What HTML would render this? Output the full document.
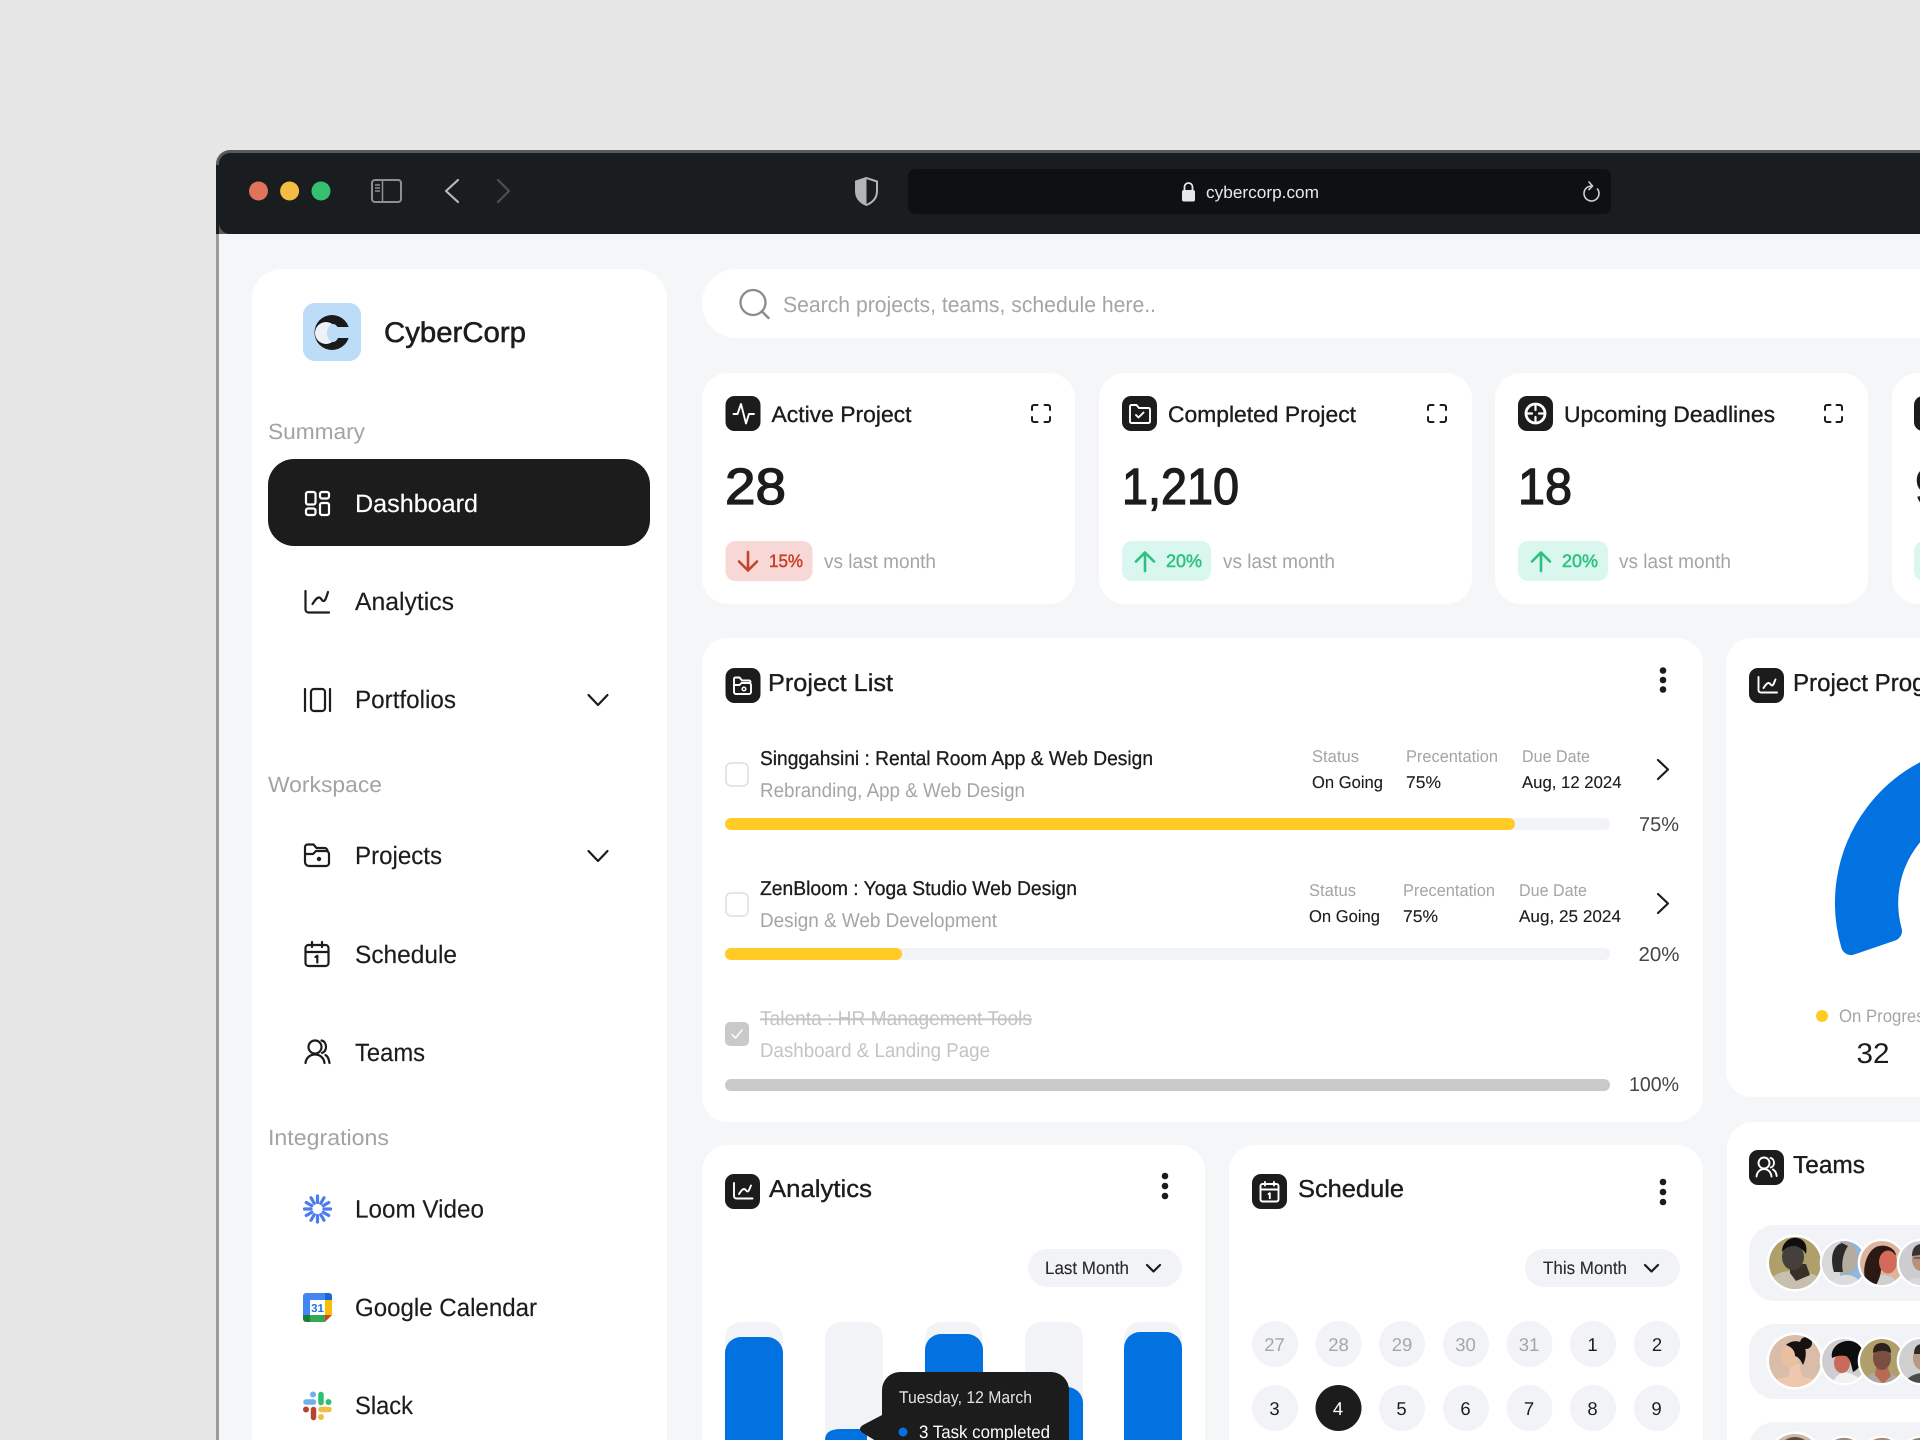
<!DOCTYPE html>
<html lang="en"><head><meta charset="utf-8"><title>CyberCorp Dashboard</title>
<style>
html,body{margin:0;padding:0;background:#e6e6e6;width:1920px;height:1440px;overflow:hidden}
svg{display:block}
text{font-family:"Liberation Sans",sans-serif;fill:#1c1c1c;text-rendering:geometricPrecision}
.m{stroke:#1c1c1c;stroke-width:.55px}
.nav{font-size:25px;stroke:#1c1c1c;stroke-width:.15px}
.sec{font-size:22px;fill:#a3a3a3}
.ct{font-size:22.5px;stroke:#1c1c1c;stroke-width:.35px}
.pt{font-size:24.5px;stroke:#1c1c1c;stroke-width:.35px}
.num{font-size:51px;stroke:#1c1c1c;stroke-width:1.3px}
.g{fill:#a5a5a5}
.vs{font-size:20px;fill:#a5a5a5}
.rt{font-size:20px;stroke:#1c1c1c;stroke-width:.3px}
.rs{font-size:20px;fill:#a5a5a5}
.lb{font-size:17px;fill:#a5a5a5}
.vl{font-size:17px;stroke:#1c1c1c;stroke-width:.12px}
.pc{font-size:20px;fill:#454545}
.d{font-size:18.5px;text-anchor:middle}
.dg{font-size:18.5px;text-anchor:middle;fill:#a5a5a5}
.dd{font-size:18px;fill:#2a2a2a;stroke:#2a2a2a;stroke-width:.12px}
.br{font-size:18px;fill:#c4432c;stroke:#c4432c;stroke-width:.5px}
.bg{font-size:18px;fill:#2cc17e;stroke:#2cc17e;stroke-width:.5px}
.i{fill:none;stroke:#1c1c1c;stroke-width:2.2;stroke-linecap:round;stroke-linejoin:round}
.e{fill:none;stroke:#1c1c1c;stroke-width:2;stroke-linecap:round;stroke-linejoin:round}
.w{fill:none;stroke:#fff;stroke-width:1.9;stroke-linecap:round;stroke-linejoin:round}
</style></head>
<body>
<svg xmlns="http://www.w3.org/2000/svg" width="1920" height="1440" viewBox="0 0 1920 1440">
<rect width="1920" height="1440" fill="#e6e6e6"/>
<!-- window -->
<rect x="216" y="150" width="1800" height="100" rx="14" fill="#5a5a5a"/>
<rect x="219" y="153" width="1800" height="81" rx="11" fill="#1a1d20"/>
<rect x="216" y="165" width="3" height="69" fill="#1a1d20"/>
<rect x="216" y="234" width="3" height="1206" fill="#9c9c9c"/>
<rect x="219" y="234" width="1701" height="1206" fill="#f5f6f8"/>
<circle cx="258.500" cy="191" r="9.500" fill="#e0735b"/>
<circle cx="289.600" cy="191" r="9.500" fill="#f4bc42"/>
<circle cx="321" cy="191" r="9.500" fill="#35c06f"/>
<rect x="372" y="180" width="29" height="22" rx="3" fill="none" stroke="#8d8f91" stroke-width="2"/>
<path d="M382.500 180v22M375 185h5M375 188h5M375 191h5" fill="none" stroke="#8d8f91" stroke-width="1.500"/>
<path d="M458 180L446 191L458 202" fill="none" stroke="#b9babb" stroke-width="2.200" stroke-linecap="round" stroke-linejoin="round"/>
<path d="M498 180L509 191L498 202" fill="none" stroke="#4d5053" stroke-width="2.200" stroke-linecap="round" stroke-linejoin="round"/>
<path d="M866.500 178L856 181.500V191C856 198 860.500 202.500 866.500 205C872.500 202.500 877 198 877 191V181.500Z" fill="none" stroke="#b4b4b4" stroke-width="2"/>
<path d="M866.500 178L856 181.500V191C856 198 860.500 202.500 866.500 205Z" fill="#b4b4b4"/>
<rect x="908" y="169" width="703" height="45" rx="7" fill="#0e1114"/>
<path d="M1184.500 190v-3a4 4 0 0 1 8 0v3" fill="none" stroke="#e8e8e8" stroke-width="1.800"/>
<rect x="1182" y="190" width="13" height="11.500" rx="2" fill="#e8e8e8"/>
<text x="1206" y="198" font-size="17" textLength="113" lengthAdjust="spacingAndGlyphs" style="fill:#e8e8e8">cybercorp.com</text>
<path d="M1597.500 189A7.500 7.500 0 1 1 1591.500 186" fill="none" stroke="#cfcfcf" stroke-width="1.600" stroke-linecap="round"/>
<path d="M1589 182l3.500 4-3.500 3.500" fill="none" stroke="#cfcfcf" stroke-width="1.600" stroke-linecap="round" stroke-linejoin="round"/>

<!-- sidebar -->
<path d="M252 1440V299a30 30 0 0 1 30-30H637a30 30 0 0 1 30 30V1440Z" fill="#fff"/>
<rect x="303" y="303" width="58" height="58" rx="12" fill="#bddcf8"/>
<circle cx="332" cy="332.500" r="17.500" fill="#1a1a1a"/>
<circle cx="326" cy="333" r="11" fill="#eef1f6"/>
<ellipse cx="333" cy="333" rx="6" ry="9" fill="#bddcf8"/>
<rect x="335" y="327" width="16" height="11" fill="#bddcf8"/>
<text x="384" y="342" font-size="28.500" class="m" textLength="142" lengthAdjust="spacingAndGlyphs">CyberCorp</text>

<text x="268" y="439" class="sec" textLength="97" lengthAdjust="spacingAndGlyphs">Summary</text>
<rect x="268" y="459" width="382" height="87" rx="26" fill="#1c1c1c"/>
<g fill="none" stroke="#fff" stroke-width="2.200" stroke-linejoin="round">
<rect x="306" y="492" width="9.500" height="12.500" rx="2"/><rect x="320" y="492" width="9" height="6.500" rx="2"/><rect x="306" y="508.500" width="9.500" height="6.500" rx="2"/><rect x="320" y="503" width="9" height="12" rx="2"/></g>
<text x="355" y="512" class="nav" textLength="123" lengthAdjust="spacingAndGlyphs" style="fill:#fff;stroke:#fff">Dashboard</text>

<path class="i" d="M305.500 591v18.500a3 3 0 0 0 3 3H329M312.500 604c2-3 4-6.500 6.500-6.500s2.500 3.500 4.500 3.500 3-4.500 4.500-9"/>
<text x="355" y="610" class="nav" textLength="99" lengthAdjust="spacingAndGlyphs">Analytics</text>
<path class="i" d="M305 689v22M330 689v22"/><rect class="i" x="311" y="689" width="14" height="22" rx="3"/>
<text x="355" y="708" class="nav" textLength="101" lengthAdjust="spacingAndGlyphs">Portfolios</text>
<path class="i" d="M588.500 695l9.500 10 9.500-10"/>

<text x="268" y="792" class="sec" textLength="114" lengthAdjust="spacingAndGlyphs">Workspace</text>
<path class="i" d="M305 862V847a2.500 2.500 0 0 1 2.500-2.500h6l3 3.500h8a3 3 0 0 1 3 3M305 862a4 4 0 0 0 4 4h17a3 3 0 0 0 3-3v-9a3 3 0 0 0-3-3h-10l-3 3h-8"/><circle cx="319" cy="859" r="2.200" fill="#1c1c1c"/>
<text x="355" y="864" class="nav" textLength="87" lengthAdjust="spacingAndGlyphs">Projects</text>
<path class="i" d="M588.500 851l9.500 10 9.500-10"/>
<rect class="i" x="305.500" y="945" width="23" height="21" rx="3"/><path class="i" d="M305.500 952h23M312 942v5M322 942v5M315.500 957l1.800-1.200v6.700"/>
<text x="355" y="963" class="nav" textLength="102" lengthAdjust="spacingAndGlyphs">Schedule</text>
<circle class="i" cx="315" cy="1047" r="6.500"/><path class="i" d="M305.500 1063c.5-5 4.500-8.500 9.500-8.500s9 3.500 9.500 8.500M321.500 1040.500c3 .5 4.500 3.500 4.500 6.500s-1.500 5-4 6M325.500 1055c2.500 1.500 3.500 4.500 4 8"/>
<text x="355" y="1061" class="nav" textLength="70" lengthAdjust="spacingAndGlyphs">Teams</text>

<text x="268" y="1145" class="sec" textLength="121" lengthAdjust="spacingAndGlyphs">Integrations</text>
<g stroke="#4a7cf0" stroke-width="3.200" stroke-linecap="round">
<path d="M317.500 1202.500v-6.500"/><path d="M317.500 1202.500v-6.500" transform="rotate(30 317.500 1209)"/><path d="M317.500 1202.500v-6.500" transform="rotate(60 317.500 1209)"/><path d="M317.500 1202.500v-6.500" transform="rotate(90 317.500 1209)"/><path d="M317.500 1202.500v-6.500" transform="rotate(120 317.500 1209)"/><path d="M317.500 1202.500v-6.500" transform="rotate(150 317.500 1209)"/><path d="M317.500 1202.500v-6.500" transform="rotate(180 317.500 1209)"/><path d="M317.500 1202.500v-6.500" transform="rotate(210 317.500 1209)"/><path d="M317.500 1202.500v-6.500" transform="rotate(240 317.500 1209)"/><path d="M317.500 1202.500v-6.500" transform="rotate(270 317.500 1209)"/><path d="M317.500 1202.500v-6.500" transform="rotate(300 317.500 1209)"/><path d="M317.500 1202.500v-6.500" transform="rotate(330 317.500 1209)"/></g>
<text x="355" y="1217.500" class="nav" textLength="129" lengthAdjust="spacingAndGlyphs">Loom Video</text>
<path d="M303 1296a3 3 0 0 1 3-3h19v7h-15v15h-7z" fill="#4285f4"/><path d="M325 1293h4a3 3 0 0 1 3 3v4h-7z" fill="#1967d2"/>
<rect x="310" y="1300" width="15" height="15" fill="#fff"/><rect x="325" y="1300" width="7" height="15" fill="#fbbc04"/>
<rect x="310" y="1315" width="15" height="7" fill="#34a853"/><path d="M303 1315h7v7h-4a3 3 0 0 1-3-3z" fill="#188038"/><path d="M325 1315h7l-7 7z" fill="#c9432f"/>
<text x="317.500" y="1312" font-size="11.500" text-anchor="middle" style="fill:#1a73e8;font-weight:bold">31</text>
<text x="355" y="1316" class="nav" textLength="182" lengthAdjust="spacingAndGlyphs">Google Calendar</text>
<g stroke-linecap="round" fill="none" stroke-width="5.500">
<path stroke="#6db1ee" d="M306 1402h7.500"/><path stroke="#2fbf71" d="M321 1394.500v8"/><path stroke="#f2bd42" d="M321 1409.500h8"/><path stroke="#b8442e" d="M313.500 1409.500v8"/></g>
<circle cx="313" cy="1394.500" r="3" fill="#6db1ee"/><circle cx="328.500" cy="1402" r="3" fill="#2fbf71"/><circle cx="321" cy="1417" r="3" fill="#f2bd42"/><circle cx="306" cy="1409.500" r="3" fill="#b8442e"/>
<text x="355" y="1414" class="nav" textLength="58" lengthAdjust="spacingAndGlyphs">Slack</text>

<!-- search -->
<rect x="702" y="269" width="1400" height="69" rx="34" fill="#fff"/>
<circle cx="753" cy="302.500" r="12.500" fill="none" stroke="#8b8b8b" stroke-width="2.300"/><path d="M762.500 312l6 6" stroke="#8b8b8b" stroke-width="2.300" stroke-linecap="round"/>
<text x="783" y="312" font-size="22" textLength="373" lengthAdjust="spacingAndGlyphs" class="g">Search projects, teams, schedule here..</text>

<!-- stat cards -->
<rect x="702" y="373" width="373" height="231" rx="26" fill="#fff"/>
<rect x="725.500" y="396" width="35" height="35" rx="9" fill="#1c1c1c"/>
<path class="w" d="M733.500 414h4l3.500-10 5 19.500 3-9.500h5"/>
<text x="771.500" y="422" class="ct" textLength="140" lengthAdjust="spacingAndGlyphs">Active Project</text>
<path class="e" d="M1032 410v-3a2 2 0 0 1 2-2h3.500M1044.500 405h3.500a2 2 0 0 1 2 2v3M1032 417v3a2 2 0 0 0 2 2h3.500M1044.500 422h3.500a2 2 0 0 0 2-2v-3"/>
<text x="725" y="504" class="num" textLength="61" lengthAdjust="spacingAndGlyphs">28</text>
<rect x="725.500" y="541" width="87" height="40" rx="10" fill="#f8d8d6"/>
<path d="M748 552v18M739 561.500l9 9 9-9" fill="none" stroke="#c4432c" stroke-width="2.600" stroke-linecap="round" stroke-linejoin="round"/>
<text x="769" y="567" class="br" textLength="34" lengthAdjust="spacingAndGlyphs">15%</text>
<text x="824" y="568" class="vs" textLength="112" lengthAdjust="spacingAndGlyphs">vs last month</text>

<rect x="1099" y="373" width="373" height="231" rx="26" fill="#fff"/>
<rect x="1122" y="396" width="35" height="35" rx="9" fill="#1c1c1c"/>
<path class="w" d="M1130 421.500v-15a1.500 1.500 0 0 1 1.500-1.500h5l2.500 3h9.500a1.500 1.500 0 0 1 1.500 1.500v12a1.500 1.500 0 0 1-1.500 1.500h-17a1.500 1.500 0 0 1-1.500-1.500zM1136 415l2.500 2.500 5-5"/>
<text x="1168" y="422" class="ct" textLength="188" lengthAdjust="spacingAndGlyphs">Completed Project</text>
<path class="e" d="M1428 410v-3a2 2 0 0 1 2-2h3.500M1440.500 405h3.500a2 2 0 0 1 2 2v3M1428 417v3a2 2 0 0 0 2 2h3.500M1440.500 422h3.500a2 2 0 0 0 2-2v-3"/>
<text x="1122" y="504" class="num" textLength="117" lengthAdjust="spacingAndGlyphs">1,210</text>
<rect x="1122" y="541" width="89" height="40" rx="10" fill="#d9f7ee"/>
<path d="M1145 571v-18M1136 561.500l9-9 9 9" fill="none" stroke="#2cc17e" stroke-width="2.600" stroke-linecap="round" stroke-linejoin="round"/>
<text x="1166" y="567" class="bg" textLength="36" lengthAdjust="spacingAndGlyphs">20%</text>
<text x="1223" y="568" class="vs" textLength="112" lengthAdjust="spacingAndGlyphs">vs last month</text>

<rect x="1495" y="373" width="373" height="231" rx="26" fill="#fff"/>
<rect x="1518" y="396" width="35" height="35" rx="9" fill="#1c1c1c"/>
<circle cx="1535.500" cy="413.500" r="9.500" fill="none" stroke="#fff" stroke-width="2.800"/><path d="M1535.500 405v5M1535.500 417v5M1527 413.500h5M1539 413.500h5" stroke="#fff" stroke-width="2.200" stroke-linecap="round"/>
<text x="1564" y="422" class="ct" textLength="211" lengthAdjust="spacingAndGlyphs">Upcoming Deadlines</text>
<path class="e" d="M1825 410v-3a2 2 0 0 1 2-2h3.500M1836.500 405h3.500a2 2 0 0 1 2 2v3M1825 417v3a2 2 0 0 0 2 2h3.500M1836.500 422h3.500a2 2 0 0 0 2-2v-3"/>
<text x="1518" y="504" class="num" textLength="54" lengthAdjust="spacingAndGlyphs">18</text>
<rect x="1518" y="541" width="90" height="40" rx="10" fill="#d9f7ee"/>
<path d="M1541 571v-18M1532 561.500l9-9 9 9" fill="none" stroke="#2cc17e" stroke-width="2.600" stroke-linecap="round" stroke-linejoin="round"/>
<text x="1562" y="567" class="bg" textLength="36" lengthAdjust="spacingAndGlyphs">20%</text>
<text x="1619" y="568" class="vs" textLength="112" lengthAdjust="spacingAndGlyphs">vs last month</text>

<rect x="1892" y="373" width="373" height="231" rx="26" fill="#fff"/>
<rect x="1914" y="396" width="35" height="35" rx="9" fill="#1c1c1c"/>
<text x="1915" y="504" class="num">9</text>
<rect x="1914" y="541" width="90" height="40" rx="10" fill="#d9f7ee"/>

<!-- project list -->
<rect x="702" y="638" width="1001" height="484" rx="26" fill="#fff"/>
<rect x="725.500" y="668" width="35" height="35" rx="9" fill="#1c1c1c"/>
<path class="w" d="M734 692v-13a1.500 1.500 0 0 1 1.500-1.500h4l2.500 3h7a1.500 1.500 0 0 1 1.500 1.500M734 692a2 2 0 0 0 2 2h13a2 2 0 0 0 2-2v-7a2 2 0 0 0-2-2h-7.500l-2 2h-5.500"/><circle cx="744" cy="689" r="1.800" fill="none" stroke="#fff" stroke-width="1.500"/>
<text x="768" y="691" class="pt" textLength="125" lengthAdjust="spacingAndGlyphs">Project List</text>
<circle cx="1663" cy="670.500" r="3.300" fill="#1c1c1c"/><circle cx="1663" cy="680" r="3.300" fill="#1c1c1c"/><circle cx="1663" cy="689.500" r="3.300" fill="#1c1c1c"/>

<rect x="726" y="763" width="22" height="23" rx="5" fill="#fff" stroke="#e2e3e6" stroke-width="1.800"/>
<text x="760" y="765" class="rt" textLength="393" lengthAdjust="spacingAndGlyphs">Singgahsini : Rental Room App &amp; Web Design</text>
<text x="760" y="797" class="rs" textLength="265" lengthAdjust="spacingAndGlyphs">Rebranding, App &amp; Web Design</text>
<text x="1312" y="762" class="lb" textLength="47" lengthAdjust="spacingAndGlyphs">Status</text>
<text x="1406" y="762" class="lb" textLength="92" lengthAdjust="spacingAndGlyphs">Precentation</text>
<text x="1522" y="762" class="lb" textLength="68" lengthAdjust="spacingAndGlyphs">Due Date</text>
<text x="1312" y="788" class="vl" textLength="71" lengthAdjust="spacingAndGlyphs">On Going</text>
<text x="1406" y="788" class="vl" textLength="35" lengthAdjust="spacingAndGlyphs">75%</text>
<text x="1522" y="788" class="vl" textLength="99.500" lengthAdjust="spacingAndGlyphs">Aug, 12 2024</text>
<path class="i" d="M1658 760l10 9.500-10 9.500"/>
<rect x="725" y="818" width="885" height="12" rx="6" fill="#f2f3f6"/><rect x="725" y="818" width="790" height="12" rx="6" fill="#ffcb24"/>
<text x="1639" y="831" class="pc" textLength="40" lengthAdjust="spacingAndGlyphs">75%</text>

<rect x="726" y="893" width="22" height="23" rx="5" fill="#fff" stroke="#e2e3e6" stroke-width="1.800"/>
<text x="760" y="895" class="rt" textLength="317" lengthAdjust="spacingAndGlyphs">ZenBloom : Yoga Studio Web Design</text>
<text x="760" y="927" class="rs" textLength="237" lengthAdjust="spacingAndGlyphs">Design &amp; Web Development</text>
<text x="1309" y="896" class="lb" textLength="47" lengthAdjust="spacingAndGlyphs">Status</text>
<text x="1403" y="896" class="lb" textLength="92" lengthAdjust="spacingAndGlyphs">Precentation</text>
<text x="1519" y="896" class="lb" textLength="68" lengthAdjust="spacingAndGlyphs">Due Date</text>
<text x="1309" y="922" class="vl" textLength="71" lengthAdjust="spacingAndGlyphs">On Going</text>
<text x="1403" y="922" class="vl" textLength="35" lengthAdjust="spacingAndGlyphs">75%</text>
<text x="1519" y="922" class="vl" textLength="102" lengthAdjust="spacingAndGlyphs">Aug, 25 2024</text>
<path class="i" d="M1658 894l10 9.500-10 9.500"/>
<rect x="725" y="948" width="885" height="12" rx="6" fill="#f2f3f6"/><rect x="725" y="948" width="177" height="12" rx="6" fill="#ffcb24"/>
<text x="1638.500" y="961" class="pc" textLength="41" lengthAdjust="spacingAndGlyphs">20%</text>

<rect x="725" y="1022" width="24" height="24" rx="5" fill="#c9c9c9"/><path d="M732 1034.500l3.500 3.500 6.500-8" fill="none" stroke="#fff" stroke-width="1.500" stroke-linecap="round" stroke-linejoin="round"/>
<text x="760" y="1025" font-size="20" textLength="272" lengthAdjust="spacingAndGlyphs" text-decoration="line-through" style="fill:#c4c4c4">Talenta : HR Management Tools</text>
<text x="760" y="1057" font-size="20" textLength="230" lengthAdjust="spacingAndGlyphs" style="fill:#c4c4c4">Dashboard &amp; Landing Page</text>
<rect x="725" y="1079" width="885" height="12" rx="6" fill="#c9c9c9"/>
<text x="1629" y="1091" class="pc" textLength="50" lengthAdjust="spacingAndGlyphs">100%</text>

<!-- project progress -->
<rect x="1726" y="638" width="400" height="459" rx="26" fill="#fff"/>
<rect x="1749" y="668" width="35" height="35" rx="9" fill="#1c1c1c"/>
<path class="w" d="M1758.500 677v13a2.500 2.500 0 0 0 2.500 2.500h16M1763.500 688c1.500-2 3-5 5-5s2 2.500 3.500 2.500 2-3 3.500-6"/>
<text x="1793" y="691" class="pt" textLength="178" lengthAdjust="spacingAndGlyphs">Project Progress</text>
<path d="M1851 945A149 149 0 0 1 1994 754V798A105 105 0 0 0 1892 931Z" fill="#0272e0" stroke="#0272e0" stroke-width="20" stroke-linejoin="round"/>
<circle cx="1822" cy="1016" r="6" fill="#ffcb24"/>
<text x="1839" y="1022" font-size="18" textLength="94" lengthAdjust="spacingAndGlyphs" class="g">On Progress</text>
<text x="1873" y="1063" font-size="28.500" text-anchor="middle" textLength="33" lengthAdjust="spacingAndGlyphs">32</text>

<!-- analytics -->
<path d="M702 1440V1171a26 26 0 0 1 26-26H1179a26 26 0 0 1 26 26V1440Z" fill="#fff"/>
<rect x="725" y="1174" width="35" height="35" rx="9" fill="#1c1c1c"/>
<path class="w" d="M734 1183v13a2.500 2.500 0 0 0 2.500 2.500h16M739 1194c1.500-2 3-5 5-5s2 2.500 3.500 2.500 2-3 3.500-6"/>
<text x="769" y="1197" class="pt" textLength="103" lengthAdjust="spacingAndGlyphs">Analytics</text>
<circle cx="1165" cy="1176" r="3.300" fill="#1c1c1c"/><circle cx="1165" cy="1186" r="3.300" fill="#1c1c1c"/><circle cx="1165" cy="1196" r="3.300" fill="#1c1c1c"/>
<rect x="1028" y="1249" width="154" height="38" rx="19" fill="#f2f3f6"/>
<text x="1045" y="1274" class="dd" textLength="84" lengthAdjust="spacingAndGlyphs">Last Month</text>
<path class="i" d="M1147 1265l6.500 6.500 6.500-6.500"/>
<g fill="#f2f3f6">
<path d="M725 1440V1338a16 16 0 0 1 16-16h26a16 16 0 0 1 16 16V1440Z"/>
<path d="M825 1440V1338a16 16 0 0 1 16-16h26a16 16 0 0 1 16 16V1440Z"/>
<path d="M925 1440V1338a16 16 0 0 1 16-16h26a16 16 0 0 1 16 16V1440Z"/>
<path d="M1025 1440V1338a16 16 0 0 1 16-16h26a16 16 0 0 1 16 16V1440Z"/>
<path d="M1124 1440V1338a16 16 0 0 1 16-16h26a16 16 0 0 1 16 16V1440Z"/></g>
<g fill="#0272e0">
<path d="M725 1440V1353a16 16 0 0 1 16-16h26a16 16 0 0 1 16 16V1440Z"/>
<path d="M825 1440Q825 1429 841 1429H867V1440Z"/>
<path d="M925 1440V1350a16 16 0 0 1 16-16h26a16 16 0 0 1 16 16V1440Z"/>
<path d="M1025 1440V1403a16 16 0 0 1 16-16h26a16 16 0 0 1 16 16V1440Z"/>
<path d="M1124 1440V1348a16 16 0 0 1 16-16h26a16 16 0 0 1 16 16V1440Z"/></g>
<path d="M882 1440V1390a18 18 0 0 1 18-18H1051a18 18 0 0 1 18 18V1440Z" fill="#1c1c1c"/>
<path d="M884 1414L863 1425Q857 1429 863 1433L884 1446Z" fill="#1c1c1c" transform="translate(0 0)"/>
<text x="899" y="1403" font-size="17" textLength="133" lengthAdjust="spacingAndGlyphs" style="fill:#e2e2e2">Tuesday, 12 March</text>
<circle cx="903" cy="1432" r="4.500" fill="#0272e0"/>
<text x="919" y="1438" font-size="18" textLength="131" lengthAdjust="spacingAndGlyphs" style="fill:#fff">3 Task completed</text>

<!-- schedule -->
<path d="M1229 1440V1171a26 26 0 0 1 26-26H1677a26 26 0 0 1 26 26V1440Z" fill="#fff"/>
<rect x="1252" y="1174" width="35" height="35" rx="9" fill="#1c1c1c"/>
<rect class="w" x="1260.500" y="1184" width="18" height="17.500" rx="2"/><path class="w" d="M1260.500 1189.500h18M1265 1182v3.500M1274 1182v3.500M1268.500 1194l1.300-.8v5"/>
<text x="1298" y="1197" class="pt" textLength="106" lengthAdjust="spacingAndGlyphs">Schedule</text>
<circle cx="1663" cy="1182" r="3.300" fill="#1c1c1c"/><circle cx="1663" cy="1192" r="3.300" fill="#1c1c1c"/><circle cx="1663" cy="1202" r="3.300" fill="#1c1c1c"/>
<rect x="1525" y="1249" width="155" height="38" rx="19" fill="#f2f3f6"/>
<text x="1543" y="1274" class="dd" textLength="84" lengthAdjust="spacingAndGlyphs">This Month</text>
<path class="i" d="M1645 1265l6.500 6.500 6.500-6.500"/>
<g fill="#f2f3f6">
<circle cx="1275" cy="1344" r="23"/><circle cx="1338.500" cy="1344" r="23"/><circle cx="1402" cy="1344" r="23"/><circle cx="1466" cy="1344" r="23"/><circle cx="1529.500" cy="1344" r="23"/><circle cx="1593" cy="1344" r="23"/><circle cx="1657" cy="1344" r="23"/>
<circle cx="1275" cy="1408" r="23"/><circle cx="1402" cy="1408" r="23"/><circle cx="1466" cy="1408" r="23"/><circle cx="1529.500" cy="1408" r="23"/><circle cx="1593" cy="1408" r="23"/><circle cx="1657" cy="1408" r="23"/></g>
<circle cx="1338.500" cy="1408" r="23" fill="#1c1c1c"/>
<text x="1274.500" y="1351" class="dg">27</text><text x="1338.500" y="1351" class="dg">28</text><text x="1402" y="1351" class="dg">29</text><text x="1465.500" y="1351" class="dg">30</text><text x="1529" y="1351" class="dg">31</text>
<text x="1592.500" y="1351" class="d">1</text><text x="1657" y="1351" class="d">2</text>
<text x="1274.500" y="1415" class="d">3</text><text x="1338" y="1415" class="d" style="fill:#fff">4</text><text x="1401.500" y="1415" class="d">5</text><text x="1465.500" y="1415" class="d">6</text><text x="1529" y="1415" class="d">7</text><text x="1592.500" y="1415" class="d">8</text><text x="1656.500" y="1415" class="d">9</text>

<!-- teams -->
<path d="M1727 1440V1148a26 26 0 0 1 26-26H1920V1440Z" fill="#fff"/>
<rect x="1749" y="1150" width="35" height="35" rx="9" fill="#1c1c1c"/>
<circle class="w" cx="1764" cy="1163" r="5.500"/><path class="w" d="M1756.500 1176.500c.5-4.500 3.500-7.500 7.500-7.500s7 3 7.500 7.500M1770.500 1158c2.500.5 3.500 3 3.500 5s-1.300 4-3.300 4.500M1773 1169.500c2 1 3.300 3.500 3.700 6.500"/>
<text x="1793" y="1173" class="pt" textLength="72" lengthAdjust="spacingAndGlyphs">Teams</text>
<rect x="1749" y="1225" width="300" height="76" rx="26" fill="#f2f3f6"/>
<rect x="1749" y="1324" width="300" height="75" rx="26" fill="#f2f3f6"/>
<path d="M1749 1440V1448a26 26 0 0 1 26-26H1920V1440Z" fill="#f2f3f6"/>
<clipPath id="a1"><circle cx="1795" cy="1263" r="26"/></clipPath>
<clipPath id="a2"><circle cx="1844" cy="1263" r="22"/></clipPath>
<clipPath id="a3"><circle cx="1882" cy="1263" r="22"/></clipPath>
<clipPath id="a4"><circle cx="1921" cy="1263" r="22"/></clipPath>
<clipPath id="b1"><circle cx="1795" cy="1361" r="26"/></clipPath>
<clipPath id="b2"><circle cx="1844" cy="1361" r="22"/></clipPath>
<clipPath id="b3"><circle cx="1882" cy="1361" r="22"/></clipPath>
<clipPath id="b4"><circle cx="1921" cy="1361" r="22"/></clipPath>
<!-- row 1 -->
<circle cx="1795" cy="1263" r="28.500" fill="#fff"/>
<g clip-path="url(#a1)"><rect x="1765" y="1235" width="60" height="56" fill="#ae9f6b"/><path d="M1765 1292c2-14 12-20 24-21l20 2c6 2 13 4 16 10v10z" fill="#c8c0ae"/><path d="M1790 1264h16l4 11-14 6-6-8z" fill="#3a302a"/><ellipse cx="1793" cy="1257" rx="11" ry="13" fill="#46403c"/><path d="M1782 1252c0-10 8-15 15-14 7 1 11 7 9 16-3-5-8-8-12-8-5 0-9 2-12 6z" fill="#0f0f0f"/></g>
<circle cx="1844" cy="1263" r="24.300" fill="#fff"/>
<g clip-path="url(#a2)"><rect x="1820" y="1240" width="48" height="46" fill="#8fb7df"/><rect x="1820" y="1240" width="20" height="46" fill="#d8d8d8"/><path d="M1830 1288c1-9 8-13 16-13 9 0 15 5 16 13z" fill="#dcdcdc"/><ellipse cx="1845" cy="1258" rx="13" ry="16" fill="#b3ac9f"/><path d="M1834 1272c-4-12-2-26 8-29l6 3c-5 7-7 18-5 26z" fill="#2a2a2a"/></g>
<circle cx="1882" cy="1263" r="24.300" fill="#fff"/>
<g clip-path="url(#a3)"><rect x="1858" y="1240" width="48" height="46" fill="#dbb59e"/><path d="M1863 1290c2-10 10-15 19-15s17 5 18 15z" fill="#cfcfcf"/><path d="M1867 1285c-6-12-2-32 9-38 9-4 19 1 20 8l-6 2c-6 1-9 6-9 12 0 6-3 13-6 18z" fill="#2b1a14"/><ellipse cx="1888" cy="1262" rx="9" ry="11.500" fill="#d36a5a"/></g>
<circle cx="1921" cy="1263" r="24.300" fill="#fff"/>
<g clip-path="url(#a4)"><rect x="1898" y="1240" width="46" height="46" fill="#cdccd0"/><path d="M1902 1290c2-9 8-12 19-12s17 3 19 12z" fill="#d9d9d9"/><ellipse cx="1921" cy="1259" rx="9" ry="12" fill="#b9907a"/><path d="M1912 1256c0-9 5-12 10-12s8 4 7 10z" fill="#3a322e"/><path d="M1914 1258h13" stroke="#555" stroke-width="1.500"/></g>
<!-- row 2 -->
<circle cx="1795" cy="1361" r="28.500" fill="#fff"/>
<g clip-path="url(#b1)"><rect x="1765" y="1333" width="60" height="56" fill="#d9bda9"/><path d="M1768 1390c2-10 10-12 20-13 2-5 2-10 2-14l10 1c0 5 1 9 3 13 9 1 17 4 20 13z" fill="#efc6ae"/><ellipse cx="1790" cy="1356" rx="9" ry="11" fill="#e8c0a0"/><path d="M1786 1345c5-5 15-5 18 0 3 6 2 14-1 20-2-4-4-8-8-9 0-5-3-9-9-11z" fill="#17110f"/><circle cx="1806" cy="1343" r="6" fill="#17110f"/></g>
<circle cx="1844" cy="1361" r="24.300" fill="#fff"/>
<g clip-path="url(#b2)"><rect x="1820" y="1338" width="48" height="46" fill="#cfcdd0"/><path d="M1832 1386c1-7 5-12 13-14 6 1 18 6 20 14z" fill="#f2f2f2"/><ellipse cx="1842" cy="1363" rx="8" ry="10" fill="#c96b58"/><path d="M1832 1358c-2-10 8-18 18-17 10 1 15 10 13 19-2 6-6 10-10 12-2-8-3-14-7-16-5-1-10 0-14 2z" fill="#0d0d0d"/></g>
<circle cx="1882" cy="1361" r="24.300" fill="#fff"/>
<g clip-path="url(#b3)"><rect x="1858" y="1338" width="48" height="46" fill="#ae9f6b"/><path d="M1860 1386c2-9 10-13 22-14 12 1 19 6 21 14z" fill="#aaa9a5"/><path d="M1876 1368h12l3 8-8 8-8-9z" fill="#b96a52"/><ellipse cx="1882" cy="1358" rx="9" ry="12" fill="#7a4e40"/><path d="M1873 1353c0-8 4-10 9-10s9 3 9 10c-5-3-12-3-18 0z" fill="#2b211d"/></g>
<circle cx="1921" cy="1361" r="24.300" fill="#fff"/>
<g clip-path="url(#b4)"><rect x="1898" y="1338" width="46" height="46" fill="#cfcfcf"/><path d="M1904 1386c2-8 8-12 18-13 8 1 16 5 18 13z" fill="#4a4a4a"/><ellipse cx="1922" cy="1358" rx="9" ry="12" fill="#b79a86"/><path d="M1914 1354c0-8 4-10 9-10s8 3 8 10z" fill="#2f2a27"/></g>
<!-- row 3: only the tops of the avatars are inside the frame -->
<path d="M1774.700 1440A28.500 28.500 0 0 1 1815.300 1440Z" fill="#fff"/>
<path d="M1778.400 1440A26 26 0 0 1 1811.600 1440Z" fill="#cbb8a2"/>
<path d="M1785 1440Q1795 1434 1805 1440Z" fill="#5b4a3e"/>
<path d="M1830.200 1440A24.300 24.300 0 0 1 1857.800 1440Z" fill="#fff"/>
<path d="M1834.800 1440A22 22 0 0 1 1853.200 1440Z" fill="#9c8a7a"/>
<path d="M1868.200 1440A24.300 24.300 0 0 1 1895.800 1440Z" fill="#fff"/>
<path d="M1872.800 1440A22 22 0 0 1 1891.200 1440Z" fill="#a88a76"/>
<path d="M1907.200 1440A24.300 24.300 0 0 1 1934.800 1440Z" fill="#fff"/>
<path d="M1911.800 1440A22 22 0 0 1 1930.200 1440Z" fill="#8a7d6a"/>
</svg>
</body></html>
